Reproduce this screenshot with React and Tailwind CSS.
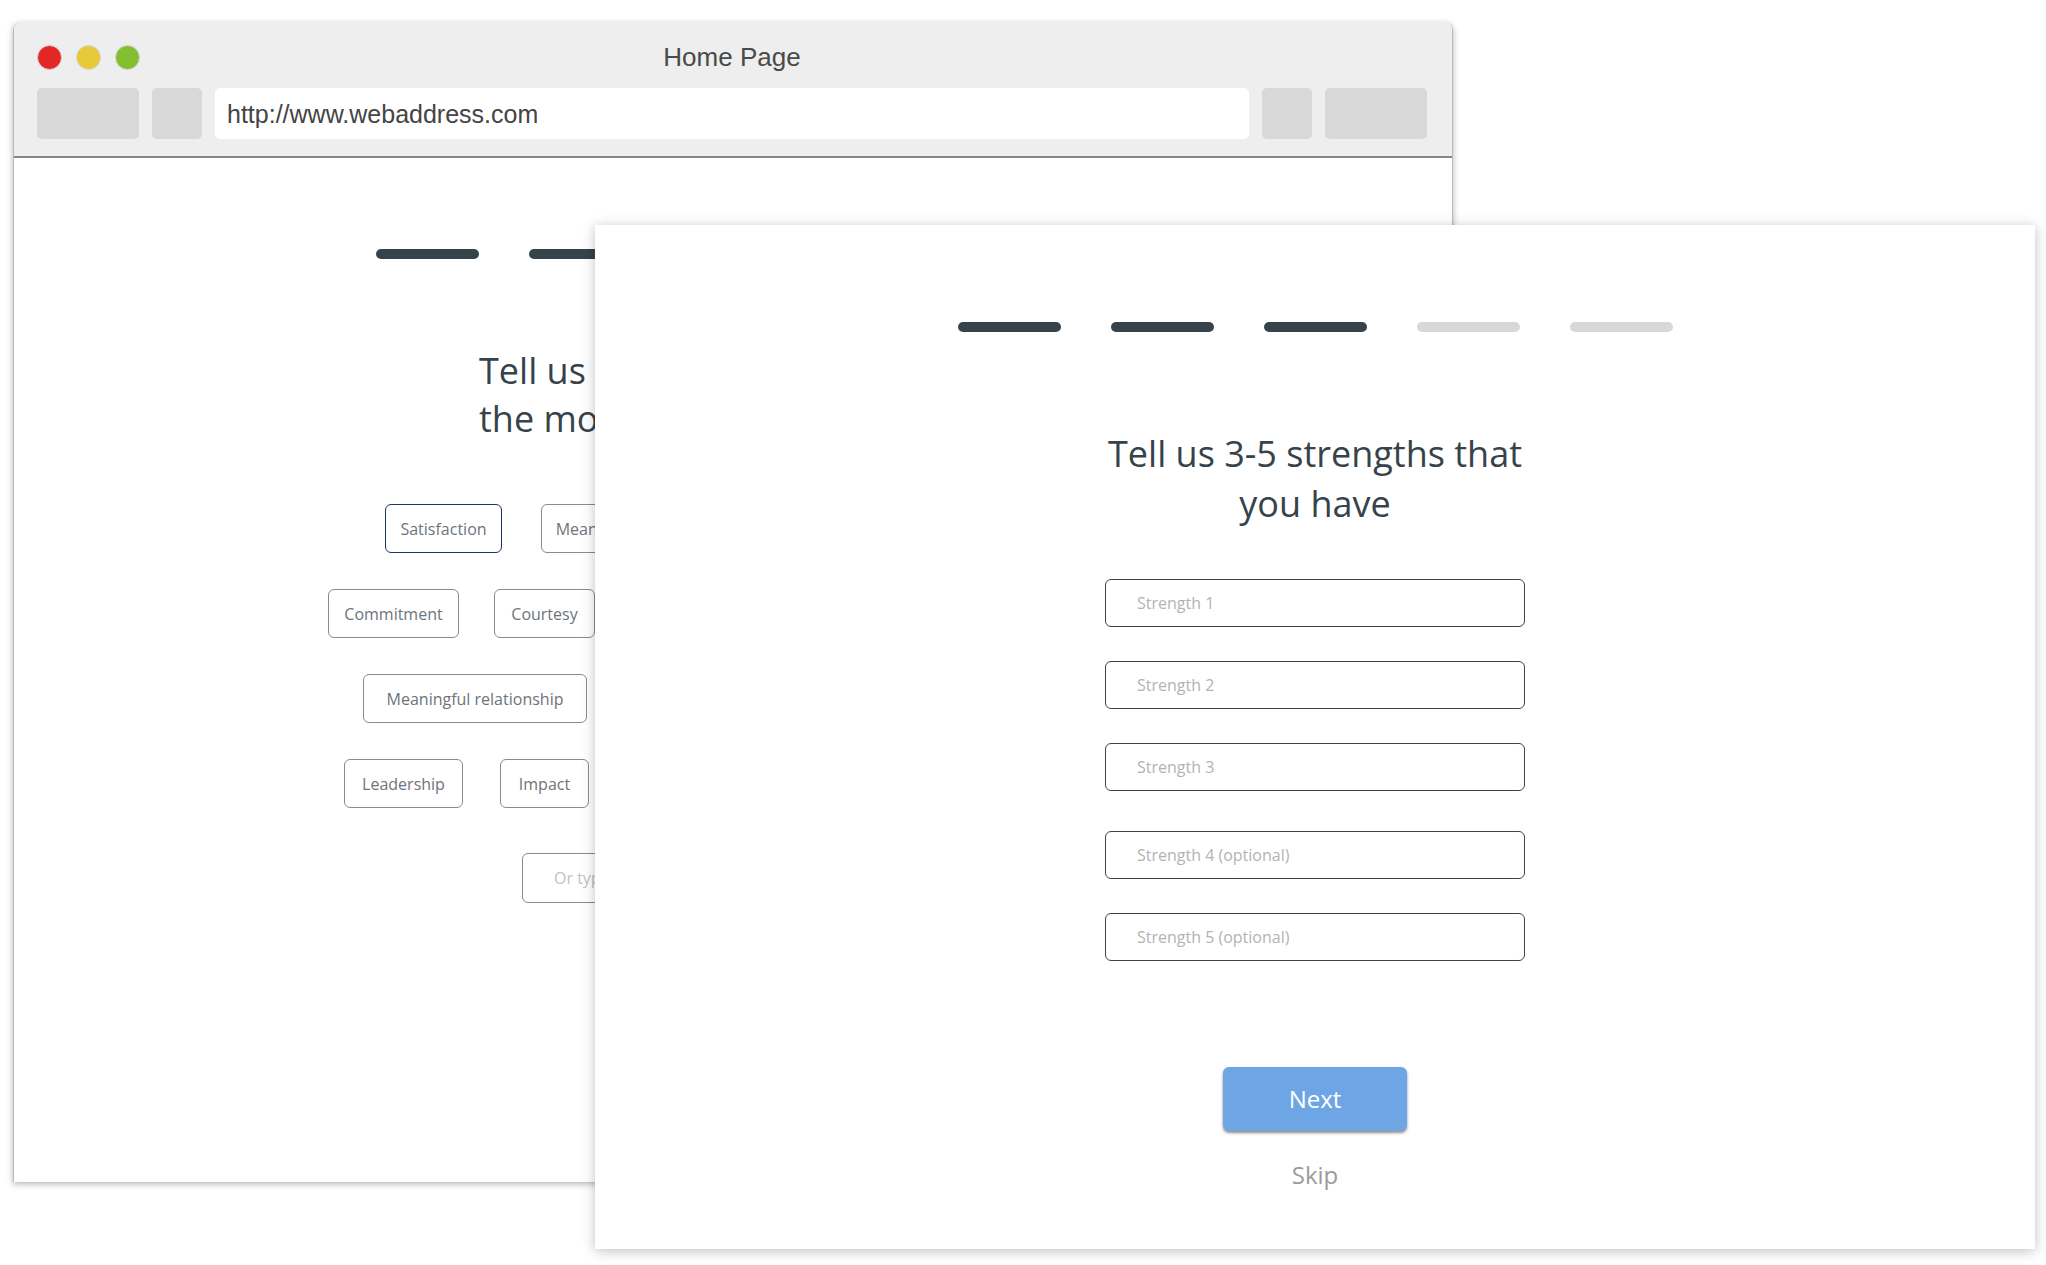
import { Fragment } from 'react'

const backRows = [
  {
    gap: 'gap-[39px]',
    chips: [
      { label: 'Satisfaction', w: 'w-[117px]', selected: true },
      { label: 'Meaning', w: 'w-[94px]' },
      { label: 'Achievement', w: 'w-[134px]' },
      { label: 'Work-life balance', w: 'w-[234px]' },
    ],
  },
  {
    gap: 'gap-[35px]',
    chips: [
      { label: 'Commitment', w: 'w-[131px]' },
      { label: 'Courtesy', w: 'w-[101px]' },
      { label: 'Recognition', w: 'w-[135px]' },
      { label: 'Creativity', w: 'w-[120px]' },
      { label: 'Independence', w: 'w-[183px]' },
    ],
  },
  {
    gap: 'gap-[36px]',
    chips: [
      { label: 'Meaningful relationship', w: 'w-[224px]' },
      { label: 'Personal growth', w: 'w-[168px]' },
      { label: 'Job security', w: 'w-[130px]' },
      { label: 'Honesty', w: 'w-[110px]' },
    ],
  },
  {
    gap: 'gap-[37px]',
    chips: [
      { label: 'Leadership', w: 'w-[119px]' },
      { label: 'Impact', w: 'w-[89px]' },
      { label: 'Teamwork', w: 'w-[115px]' },
      { label: 'Flexibility', w: 'w-[130px]' },
      { label: 'Learning', w: 'w-[177px]' },
    ],
  },
]

function ProgressBars({ done }) {
  return (
    <div className="flex gap-[50px]">
      {[0, 1, 2, 3, 4].map((i) => (
        <div
          key={i}
          className={
            i < done
              ? 'h-[10px] w-[103px] rounded-full bg-[#36434b]'
              : 'h-[10px] w-[103px] rounded-full bg-[#d8d8d8]'
          }
        />
      ))}
    </div>
  )
}

function StrengthInput({ placeholder }) {
  return (
    <input
      placeholder={placeholder}
      className="h-[48px] w-[420px] rounded-[6px] border-[1.5px] border-[#3a444c] bg-white pl-[31px] text-[16px] text-[#36434b] outline-none placeholder:text-[#b3b3b3]"
    />
  )
}

export default function App() {
  return (
    <div className="relative h-[1265px] w-[2046px] overflow-hidden bg-white">
      {/* Browser window behind */}
      <div className="absolute left-[13px] top-[22px] w-[1440px] overflow-hidden rounded-t-[8px] border-x border-[#b9b9b9] shadow-[0_2px_6px_rgba(0,0,0,0.3)]">
        <div className="flex h-[136px] flex-col border-b-2 border-[#80878b] bg-[#eeeeee] pl-[23px] pr-[25px] pt-[20px] font-['Liberation_Sans',Arial,sans-serif]">
          <div className="grid h-[30px] grid-cols-[1fr_auto_1fr] items-center">
            <div className="flex gap-[14px]">
              <span className="h-[25px] w-[25px] rounded-full border border-[#d6d6d6] bg-[#e42626]" />
              <span className="h-[25px] w-[25px] rounded-full border border-[#d6d6d6] bg-[#e8c93a]" />
              <span className="h-[25px] w-[25px] rounded-full border border-[#d6d6d6] bg-[#83c02f]" />
            </div>
            <div className="text-[26px] leading-[30px] text-[#4a4a4a]">Home Page</div>
            <div />
          </div>
          <div className="mt-[16px] flex h-[51px] gap-[13px]">
            <div className="w-[102px] rounded-[5px] bg-[#d8d8d8]" />
            <div className="w-[50px] rounded-[5px] bg-[#d8d8d8]" />
            <div className="flex flex-1 items-center rounded-[5px] bg-white pl-[12px] pt-[3px] text-[25px] text-[#444444]">
              http://www.webaddress.com
            </div>
            <div className="w-[50px] rounded-[5px] bg-[#d8d8d8]" />
            <div className="w-[102px] rounded-[5px] bg-[#d8d8d8]" />
          </div>
        </div>

        <div className="flex h-[1024px] flex-col items-center bg-white pt-[91px] font-['Open_Sans',sans-serif]">
          <ProgressBars done={2} />
          <h2 className="mt-[88px] w-[508px] whitespace-nowrap text-left text-[36px] font-normal leading-[48px] text-[#36434b]">
            Tell us what you value
            <br />
            the most in your work
          </h2>
          <div className="mt-[61px] flex flex-col gap-[36px]">
            {backRows.map((row, r) => (
              <div key={r} className={`flex h-[49px] justify-center ${row.gap}`}>
                {row.chips.map((chip) => (
                  <div
                    key={chip.label}
                    className={
                      chip.selected
                        ? `${chip.w} flex items-center justify-center rounded-[6px] border-[1.5px] border-[#1c3564] text-[16px] text-[#6d747a]`
                        : `${chip.w} flex items-center justify-center rounded-[6px] border-[1.5px] border-[#868c91] text-[16px] text-[#6d747a]`
                    }
                  >
                    {chip.label}
                  </div>
                ))}
              </div>
            ))}
          </div>
          <input
            placeholder="Or type your own"
            className="mt-[45px] h-[50px] w-[422px] rounded-[6px] border-[1.5px] border-[#868c91] pl-[31px] text-[16px] outline-none placeholder:text-[#c2c2c2]"
          />
        </div>
      </div>

      {/* Front step: strengths */}
      <div className="absolute left-[595px] top-[225px] flex h-[1024px] w-[1440px] flex-col items-center bg-white pt-[97px] font-['Open_Sans',sans-serif] shadow-[0_2px_12px_rgba(0,0,0,0.25)]">
        <ProgressBars done={3} />
        <h1 className="mt-[97px] text-center text-[36px] font-normal leading-[50px] text-[#36434b]">
          Tell us 3-5 strengths that
          <br />
          you have
        </h1>
        <div className="mt-[50px] flex flex-col gap-[34px]">
          <StrengthInput placeholder="Strength 1" />
          <StrengthInput placeholder="Strength 2" />
          <StrengthInput placeholder="Strength 3" />
        </div>
        <div className="mt-[40px] flex flex-col gap-[34px]">
          <StrengthInput placeholder="Strength 4 (optional)" />
          <StrengthInput placeholder="Strength 5 (optional)" />
        </div>
        <button className="mt-[106px] h-[64px] w-[184px] rounded-[6px] bg-[#6ea6e5] text-[24px] text-white shadow-[0_2px_3px_rgba(0,0,0,0.45)]">
          Next
        </button>
        <div className="mt-[28px] text-[24px] leading-[32px] text-[#9b9b9b]">Skip</div>
      </div>
    </div>
  )
}
